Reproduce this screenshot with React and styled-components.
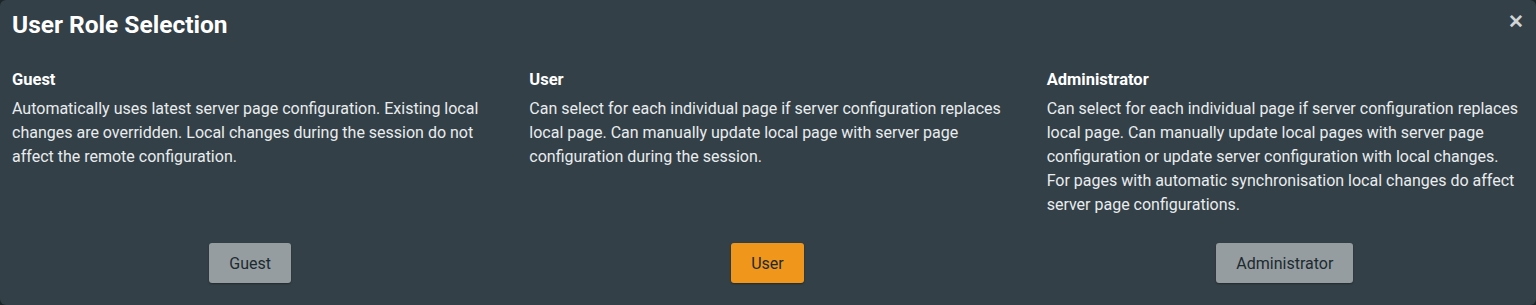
import React from 'react';
import styled, { createGlobalStyle } from 'styled-components';

const GlobalStyle = createGlobalStyle`
  html, body {
    margin: 0;
    padding: 0;
    background: #1c2529;
  }
  body {
    font-family: Roboto, "Liberation Sans", sans-serif;
  }
`;

const Modal = styled.div`
  box-sizing: border-box;
  width: 1536px;
  height: 305px;
  background: #334047;
  border-radius: 6px;
  color: #eef1f2;
  padding: 0 13px 0 12px;
  display: flex;
  flex-direction: column;
`;

const Header = styled.div`
  height: 48px;
  display: flex;
  align-items: center;
  justify-content: space-between;
`;

const Title = styled.h1`
  margin: 0;
  font-size: 24.5px;
  font-weight: 700;
  color: #ffffff;
`;

const Close = styled.button`
  border: none;
  background: none;
  padding: 0;
  margin: -6px -1px 0 0;
  color: #cfd4d6;
  font-size: 19px;
  font-weight: 700;
  line-height: 1;
  cursor: pointer;
`;

const Columns = styled.div`
  display: grid;
  grid-template-columns: repeat(3, 1fr);
  column-gap: 41px;
  padding-top: 20px;
`;

const Column = styled.div`
  display: flex;
  flex-direction: column;
`;

const RoleName = styled.h2`
  margin: 0;
  font-size: 16.5px;
  font-weight: 700;
  line-height: 24px;
  color: #ffffff;
`;

const Description = styled.p`
  margin: 5px 0 0 0;
  font-size: 16px;
  line-height: 24px;
  color: #e9ecee;
`;

const Actions = styled.div`
  margin-top: auto;
  padding-top: 26px;
  display: flex;
  justify-content: center;
`;

const RoleButton = styled.button`
  height: 40px;
  padding: 0 20px;
  border: none;
  border-radius: 3px;
  background: ${(p) => (p.$active ? '#f0961b' : '#959da0')};
  color: #1d2a30;
  font-family: inherit;
  font-size: 16px;
  box-shadow: 0 1px 2px rgba(0, 0, 0, 0.35);
  cursor: pointer;
`;

const roles = [
    {
        name: 'Guest',
        text: 'Automatically uses latest server page configuration. Existing local changes are overridden. Local changes during the session do not affect the remote configuration.',
    },
    {
        name: 'User',
        text: 'Can select for each individual page if server configuration replaces local page. Can manually update local page with server page configuration during the session.',
        active: true,
    },
    {
        name: 'Administrator',
        text: 'Can select for each individual page if server configuration replaces local page. Can manually update local pages with server page configuration or update server configuration with local changes. For pages with automatic synchronisation local changes do affect server page configurations.',
    },
];

const App = () => {
    return (
        <>
            <GlobalStyle />
            <Modal>
                <Header>
                    <Title>User Role Selection</Title>
                    <Close aria-label="Close">✕</Close>
                </Header>
                <Columns>
                    {roles.map((role) => (
                        <Column key={role.name}>
                            <RoleName>{role.name}</RoleName>
                            <Description>{role.text}</Description>
                            <Actions>
                                <RoleButton $active={role.active}>{role.name}</RoleButton>
                            </Actions>
                        </Column>
                    ))}
                </Columns>
            </Modal>
        </>
    );
};

export default App;
